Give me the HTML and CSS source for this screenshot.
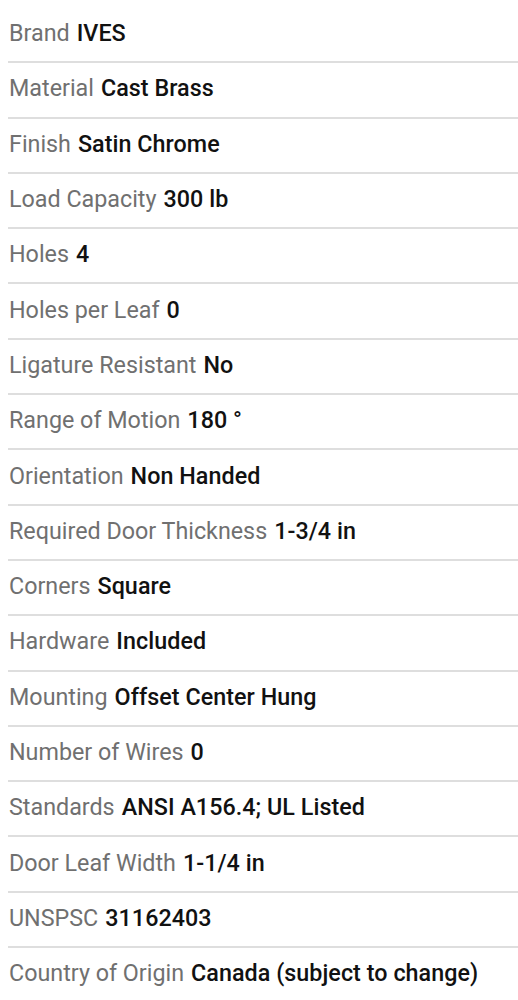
FILE: index.html
```html
<!DOCTYPE html>
<html>
	<head>
		<meta charset="UTF-8">
		<title>Specifications</title>
		<link rel="stylesheet" href="styles.css">
	</head>
	<body>
		<ul class="specs">
			<li><span class="label">Brand</span> <span class="value">IVES</span></li>
			<li><span class="label">Material</span> <span class="value">Cast Brass</span></li>
			<li><span class="label">Finish</span> <span class="value">Satin Chrome</span></li>
			<li><span class="label">Load Capacity</span> <span class="value">300 lb</span></li>
			<li><span class="label">Holes</span> <span class="value">4</span></li>
			<li><span class="label">Holes per Leaf</span> <span class="value">0</span></li>
			<li><span class="label">Ligature Resistant</span> <span class="value">No</span></li>
			<li><span class="label">Range of Motion</span> <span class="value">180 °</span></li>
			<li><span class="label">Orientation</span> <span class="value">Non Handed</span></li>
			<li><span class="label">Required Door Thickness</span> <span class="value">1-3/4 in</span></li>
			<li><span class="label">Corners</span> <span class="value">Square</span></li>
			<li><span class="label">Hardware</span> <span class="value">Included</span></li>
			<li><span class="label">Mounting</span> <span class="value">Offset Center Hung</span></li>
			<li><span class="label">Number of Wires</span> <span class="value">0</span></li>
			<li><span class="label">Standards</span> <span class="value">ANSI A156.4; UL Listed</span></li>
			<li><span class="label">Door Leaf Width</span> <span class="value">1-1/4 in</span></li>
			<li><span class="label">UNSPSC</span> <span class="value">31162403</span></li>
			<li><span class="label">Country of Origin</span> <span class="value">Canada (subject to change)</span></li>
		</ul>
	</body>
</html>
```

FILE: styles.css
```css
*{
	margin: 0;
	padding: 0;
}
body{
	background: #fff;
	padding: 8px 0 0 8px;
	font-family: Roboto, "Liberation Sans", sans-serif;
	font-size: 23.3px;
	overflow: hidden;
}
.specs{
	list-style: none;
}
.specs li{
	display: flex;
	align-items: center;
	gap: 7px;
	height: 50.3px;
	padding: 0 0 3px 1px;
	white-space: nowrap;
}
.specs li+li{
	border-top: 2px solid #dedede;
}
.label{
	color: #707070;
}
.value{
	color: #111;
	font-weight: 500;
	letter-spacing: 0.05px;
}
```
